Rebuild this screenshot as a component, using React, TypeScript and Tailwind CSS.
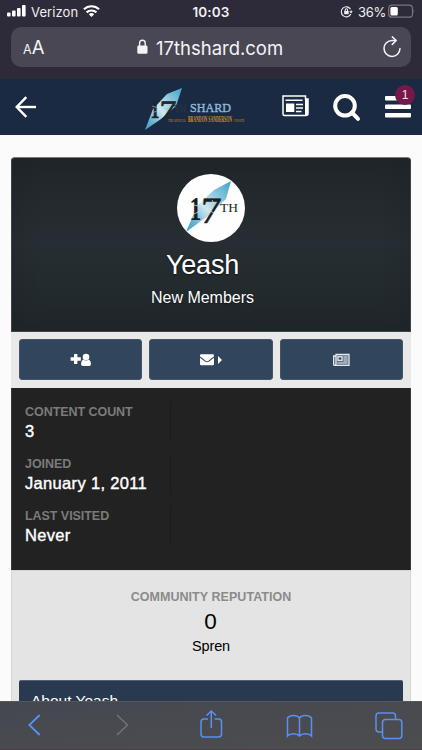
import React from "react";

const Shard = ({ id, points }: { id: string; points: string }) => (
  <>
    <defs>
      <linearGradient id={id} x1="1" y1="0" x2="0" y2="1">
        <stop offset="0" stopColor="#3fa3c9" />
        <stop offset="0.3" stopColor="#8cc8df" />
        <stop offset="0.55" stopColor="#cfe8ef" />
        <stop offset="0.8" stopColor="#69b5d3" />
        <stop offset="1" stopColor="#3aa0c6" />
      </linearGradient>
    </defs>
    <polygon points={points} fill={`url(#${id})`} />
  </>
);

function StatusBar() {
  return (
    <div className="grid h-[27px] grid-cols-3 items-start px-[7px] font-[Inter,sans-serif] leading-[24px] text-[#f0f0f3]">
      <div className="flex items-center">
        <svg width="19" height="24" viewBox="0 0 19 24" fill="#fff">
          <rect x="0" y="12.5" width="3.6" height="4" rx="1" />
          <rect x="5" y="10.5" width="3.6" height="6" rx="1" />
          <rect x="10" y="8" width="3.6" height="8.5" rx="1" />
          <rect x="15" y="5" width="3.6" height="11.5" rx="1" />
        </svg>
        <span className="ml-[5px] w-[47px] text-[13px] tracking-[0.1px]">Verizon</span>
        <svg className="ml-[5px]" width="17" height="24" viewBox="0 0 17 24" fill="none" stroke="#fff" strokeWidth="2.2">
          <path d="M.9 9.3a11 11 0 0 1 15.2 0" />
          <path d="M3.6 12.4a7.2 7.2 0 0 1 9.8 0" />
          <path d="M5.8 14.3a4 4 0 0 1 5.4 0L8.5 17.1z" fill="#fff" stroke="none" />
        </svg>
      </div>
      <div className="text-center text-[13.5px] font-semibold tracking-[0.1px]">10:03</div>
      <div className="flex items-center justify-end">
        <svg width="13" height="24" viewBox="0 0 13 24" fill="none" stroke="#f0f0f3" strokeWidth="1.1">
          <path d="M10.5 9.1A5 5 0 1 0 10.8 14" />
          <path d="M11.2 10.4v1.7" />
          <path d="M9.2 11.2h3.6l-1.8 2.4z" fill="#f0f0f3" stroke="none" />
          <rect x="4.2" y="11" width="4.5" height="3.2" fill="#f0f0f3" stroke="none" />
          <path d="M5.2 11v-1a1.2 1.2 0 0 1 2.4 0v1" />
        </svg>
        <span className="ml-[5px] w-[28px] text-[13px] tracking-[-0.3px]">36%</span>
        <svg className="-mr-[1px] ml-[2px]" width="28" height="24" viewBox="0 0 28 24">
          <rect x=".7" y="5.2" width="23.8" height="12" rx="3.3" fill="none" stroke="#77757f" strokeWidth="1.2" />
          <rect x="2.4" y="7" width="7.4" height="8.4" rx="1.5" fill="#fff" />
          <path d="M25.6 9.2q1.8 2 0 4z" fill="#77757f" />
        </svg>
      </div>
    </div>
  );
}

function AddressBar() {
  return (
    <div className="mx-[11px] mb-[12px] flex h-[40px] items-center rounded-[10px] bg-[#494754] pr-[10px] pl-[12px] font-[Inter,sans-serif] text-[#f4f4f6]">
      <div className="flex w-[24px] items-baseline pt-[2px]">
        <span className="text-[12.5px] leading-[24px]">A</span>
        <span className="text-[18.5px] leading-[24px]">A</span>
      </div>
      <div className="ml-[90px] flex items-center">
        <svg width="11" height="16" viewBox="0 0 11 16">
          <rect x=".3" y="6.5" width="10.2" height="8.3" rx="1.4" fill="#f4f4f6" />
          <path d="M2.6 7V4a2.8 2.8 0 0 1 5.6 0v3" fill="none" stroke="#f4f4f6" strokeWidth="1.4" />
        </svg>
        <span className="ml-[8px] pt-px text-[18.5px] leading-[24px] tracking-[-0.01px] whitespace-nowrap">17thshard.com</span>
      </div>
      <svg className="ml-auto" width="18" height="22" viewBox="0 0 18 22" fill="none" stroke="#f4f4f6" strokeWidth="1.5" strokeLinecap="round" strokeLinejoin="round">
        <path d="M12.6 4.4H9a8 8 0 1 0 8 8.2" />
        <path d="M9.3.9l3.9 3.6-3.9 3.9" />
      </svg>
    </div>
  );
}

function SiteLogo() {
  return (
    <svg className="overflow-visible" width="104" height="48" viewBox="0 0 104 48">
      <Shard id="logoShard" points="39,2 24,8 10,23 2,44 18,33 33,20" />
      <g fontFamily="'Liberation Serif', serif">
        <text transform="translate(7.500 32) scale(.68 1)" fontSize="26" fontWeight="bold" fill="#1e262c" stroke="#1e262c" strokeWidth=".6">1</text>
        <text transform="translate(15.500 34) skewX(-4) scale(1.2 1)" fontSize="28" fill="#1e262c" stroke="#1e262c" strokeWidth=".7">7</text>
        <path d="M9 20l5 1.500M9 27l5-2M22 22l3 2" stroke="#8fb9c8" strokeWidth=".7" />
        <text x="31" y="25.500" fontSize="9.500" fill="#28323b" stroke="#28323b" strokeWidth=".3" textLength="12.500" lengthAdjust="spacingAndGlyphs">TH</text>
        <text x="47" y="25.500" fontSize="12.500" fill="#8bbad8" stroke="#8bbad8" strokeWidth=".4" textLength="41" lengthAdjust="spacingAndGlyphs">SHARD</text>
        <g fontWeight="bold">
          <text transform="translate(25 36.300) scale(.5 1)" fontSize="5" fill="#a8722b" textLength="36" lengthAdjust="spacingAndGlyphs">THE OFFICIAL</text>
          <text transform="translate(45 36.300) scale(.5 1)" fontSize="7.800" fill="#d08f2c" textLength="88" lengthAdjust="spacingAndGlyphs">BRANDON SANDERSON</text>
          <text transform="translate(91 36.300) scale(.5 1)" fontSize="5" fill="#a8722b" textLength="21" lengthAdjust="spacingAndGlyphs">FANSITE</text>
        </g>
      </g>
    </svg>
  );
}

function SiteHeader() {
  return (
    <header className="flex h-[56px] items-center bg-[#1a2a43] pl-[15px]">
      <svg width="22" height="22" viewBox="0 0 22 22" fill="none" stroke="#fff" strokeWidth="2.4">
        <path d="M21 11H2" />
        <path d="M11.3 1.2L1.7 11l9.6 9.8" />
      </svg>
      <div className="mt-[5px] ml-[106px]"><SiteLogo /></div>
      <svg className="mb-[3px] ml-[35px]" width="27" height="22" viewBox="0 0 27 22">
        <path d="M1 1h22.5v3H26v14.5q0 2-2 2H2.5Q1 20.500 1 19z" fill="none" stroke="#fff" strokeWidth="1.5" />
        <path d="M23 4h3v15q-1 2-3 1z" fill="#fff" />
        <path d="M3.500 5.200h17M14 9.500h7M14 13h7M14 16.500h5.500" stroke="#fff" strokeWidth="1.500" />
        <rect x="4" y="8.500" width="8.300" height="8.500" fill="#fff" />
      </svg>
      <svg className="mt-[1px] ml-[24px]" width="28" height="28" viewBox="0 0 28 28" fill="none" stroke="#fff" strokeWidth="4">
        <circle cx="12" cy="11.800" r="9.800" />
        <path d="M19 18.500l6 6.300" strokeLinecap="round" />
      </svg>
      <div className="relative ml-[24px] h-[22px] w-[26px]">
        <svg width="26" height="22" viewBox="0 0 26 22" fill="#fff">
          <rect y="0" width="26" height="4.500" rx="1" />
          <rect y="8.500" width="26" height="4.500" rx="1" />
          <rect y="17" width="26" height="4.500" rx="1" />
        </svg>
        <span className="absolute -top-[11px] left-[10px] flex size-[20px] items-center justify-center rounded-full bg-[#781749] text-[12px] text-[#f0e5ec]">1</span>
      </div>
    </header>
  );
}

function Avatar() {
  return (
    <svg className="ml-[165px] block" width="68" height="68" viewBox="0 0 68 68">
      <circle cx="34" cy="34" r="34" fill="#fefefe" />
      <Shard id="avatarShard" points="54,7 37,16 20,32 9,58 31,42 49,25" />
      <g fontFamily="'Liberation Serif', serif" fill="#1b1d20">
        <text transform="translate(12.500 45.500) scale(.72 1)" fontSize="33" fontWeight="bold">1</text>
        <text transform="translate(22.500 48.500) skewX(-4) scale(1.120 1)" fontSize="37" stroke="#1b1d20" strokeWidth=".5">7</text>
        <text x="43" y="37.500" fontSize="12.500" textLength="18" lengthAdjust="spacingAndGlyphs">TH</text>
      </g>
      <path d="M17 31l6 1.500M17 40l6-3M35 26l2 4M33 37l4 2" stroke="#c4dfe8" strokeWidth=".8" />
    </svg>
  );
}

function Profile() {
  return (
    <section className="h-[175px] rounded-t-[4px] border border-[#3f4345] border-t-[#77797b] bg-[#252c31] bg-linear-to-b from-[#20262a] via-[#272e33] to-[#20272a] pt-[16px] text-center text-white shadow-[inset_0_0_24px_#171d2055]">
      <Avatar />
      <div className="pr-[17px]">
        <h1 className="mt-[6px] text-[27px] leading-[34px] tracking-[-0.2px] [text-shadow:0_1px_2px_#0009]">Yeash</h1>
        <p className="mt-[6px] text-[16px] leading-[20px] tracking-[-0.020px] [text-shadow:0_1px_2px_#0009]">New Members</p>
      </div>
    </section>
  );
}

function Actions() {
  const button = "flex h-[41px] flex-1 items-center justify-center rounded-[3px] border border-[#41566a] bg-[#31455d]";
  return (
    <div className="flex h-[56px] gap-[7px] bg-[#e9e9e9] px-[8px] pt-[7px]">
      <button className={button}>
        <svg width="22" height="14" viewBox="0 0 22 14" fill="#fff">
          <path d="M4 1h3.400v3.300h3.400v3.400H7.400V11H4V7.700H.6V4.300H4z" />
          <circle cx="16" cy="4" r="3.300" />
          <path d="M13 6.500q3 2.200 6 0 2 1.500 2 4.500 0 2-2 2h-6q-2 0-2-2 0-3 2-4.500z" />
        </svg>
      </button>
      <button className={button}>
        <svg width="22" height="14" viewBox="0 0 22 14" fill="#fff">
          <rect x="0" y="1.300" width="14" height="11" rx="1.200" />
          <path d="M0 4l5.200 4.100q1.800 1.300 3.600 0L14 4" fill="none" stroke="#31455d" strokeWidth="1.100" />
          <path d="M18 3l4 4-4 4z" />
        </svg>
      </button>
      <button className={button}>
        <svg width="17" height="14" viewBox="0 0 17 14" fill="none" stroke="#e4e8ee" strokeWidth="1.3">
          <path d="M3 1.500h13v10.800H2q-1.500 0-1.500-1.500V3H3zM3 3v8q0 1-1 1" fill="#5d6e84" />
          <rect x="5" y="3.800" width="4" height="3.500" fill="#31455d" />
          <path d="M10.500 4h4M10.500 6h4M10.500 8h4M4.500 10h10" strokeWidth="1" />
        </svg>
      </button>
    </div>
  );
}

const stats = [
  ["CONTENT COUNT", "3"],
  ["JOINED", "January 1, 2011"],
  ["LAST VISITED", "Never"],
];

function Stats() {
  return (
    <dl className="flex h-[182px] flex-col gap-[10px] border-x border-[#383838] bg-[#222] pt-[13px] pl-[13px]">
      {stats.map(([label, value]) => (
        <div key={label} className="h-[42px] w-[146px] border-r border-[#1c1c1c]">
          <dt className="pt-[3px] text-[12.500px] leading-[17px] font-bold tracking-[-0.05px] whitespace-nowrap text-[#7b7b7b]">{label}</dt>
          <dd className="-mt-px text-[16.500px] leading-[22px] tracking-[0.330px] whitespace-nowrap text-white [-webkit-text-stroke:0.4px_#fff]">{value}</dd>
        </div>
      ))}
    </dl>
  );
}

function Toolbar() {
  return (
    <nav className="flex h-[49px] items-center border-t border-b border-t-[#53585d] border-b-[#493f48] bg-linear-to-br from-[#44484f] to-[#4d4d50] pb-px pl-[28px]">
      <svg width="13" height="22" viewBox="0 0 13 22" fill="none" stroke="#5a90ee" strokeWidth="1.900"><path d="M11.700 1L1.300 11l10.400 10" /></svg>
      <svg className="ml-[75px]" width="13" height="22" viewBox="0 0 13 22" fill="none" stroke="#707276" strokeWidth="1.600"><path d="M1 1l10.400 10L1 21" /></svg>
      <svg className="mb-[3px] ml-[71px]" width="23" height="30" viewBox="0 0 23 30" fill="none" stroke="#5a90ee" strokeWidth="1.500"><path d="M8 10H4Q1 10 1 13v12q0 3 3 3h14.500q3 0 3-3V13q0-3-3-3h-4M11.300 19V2M6.500 6.500L11.300 2l4.800 4.500" /></svg>
      <svg className="ml-[63px] mt-[2px]" width="27" height="24" viewBox="0 0 27 24" fill="none" stroke="#5a90ee" strokeWidth="1.500"><path d="M13.500 4v18M13.500 4C11 .7 4 .7 1.500 4v18C4 19 11 19 13.500 22 16 19 23 19 25.500 22V4C23 .7 16 .7 13.500 4z" /></svg>
      <svg className="ml-[62px] mt-px" width="28" height="28" viewBox="0 0 28 28" fill="none" stroke="#5a90ee" strokeWidth="1.500"><rect x="7.500" y="7.500" width="19.300" height="19" rx="3" /><path d="M7 20H4q-3 0-3-3V4q0-3 3-3h13.500q3 0 3 3v3" /></svg>
    </nav>
  );
}

export default function App() {
  return (
    <div className="flex h-[750px] w-[422px] flex-col overflow-hidden bg-[#fbfbfb] font-['Liberation_Sans',Arial,sans-serif]">
      <div className="h-[79px] shrink-0 bg-[#2d2a39]">
        <StatusBar />
        <AddressBar />
      </div>
      <SiteHeader />
      <main className="mx-[11px] mt-[22px] h-[544px] overflow-hidden">
        <Profile />
        <Actions />
        <Stats />
        <section className="h-[131px] border-x border-t border-[#d5d5d5] bg-[#e4e4e4] px-[7px] text-center">
          <div className="h-[109px] pt-[18px] text-black">
            <h2 className="text-[12.500px] leading-[17px] font-bold tracking-[0.050px] text-[#8b8b8b]">COMMUNITY REPUTATION</h2>
            <p className="mt-[2px] -ml-[1px] text-[22.500px] leading-[28px]">0</p>
            <p className="text-[14.500px] leading-[20px] tracking-[-0.100px]">Spren</p>
          </div>
          <h3 className="h-[21px] overflow-hidden rounded-t-[2px] border-t border-[#516176] bg-[#293950] pt-[10px] pl-[12px] text-left text-[15.500px] leading-[20px] text-white">About Yeash</h3>
        </section>
      </main>
      <Toolbar />
    </div>
  );
}
